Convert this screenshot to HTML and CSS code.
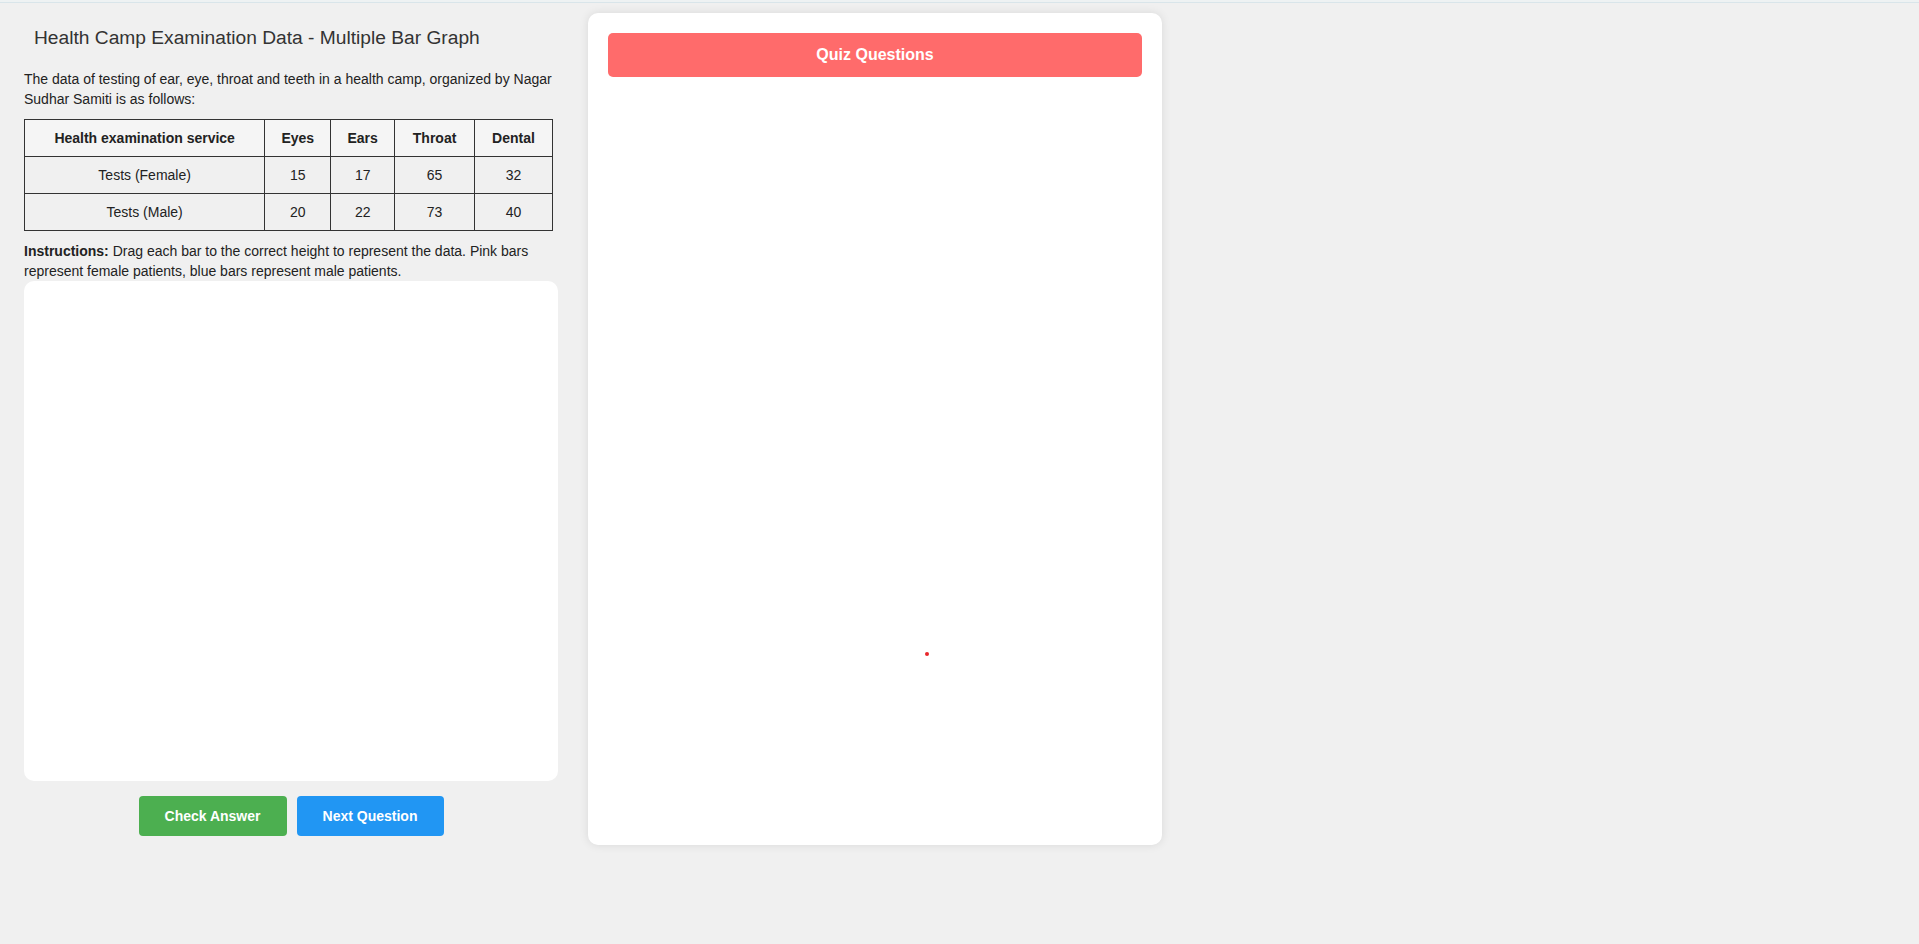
FILE: index.html
```html
<!DOCTYPE html>
<html lang="en">
<head>
<meta charset="utf-8">
<title>Health Camp Examination Data - Multiple Bar Graph</title>
<link rel="stylesheet" href="styles.css">
</head>
<body>
<div class="topbar"></div>
<div class="container">
  <div class="left">
    <h2 class="title">Health Camp Examination Data - Multiple Bar Graph</h2>
    <p class="intro">The data of testing of ear, eye, throat and teeth in a health camp, organized by Nagar Sudhar Samiti is as follows:</p>
    <table class="data">
      <thead>
        <tr>
          <th class="c-service">Health examination service</th>
          <th class="c-eyes">Eyes</th>
          <th class="c-ears">Ears</th>
          <th class="c-throat">Throat</th>
          <th class="c-dental">Dental</th>
        </tr>
      </thead>
      <tbody>
        <tr><td>Tests (Female)</td><td>15</td><td>17</td><td>65</td><td>32</td></tr>
        <tr><td>Tests (Male)</td><td>20</td><td>22</td><td>73</td><td>40</td></tr>
      </tbody>
    </table>
    <p class="instructions"><strong>Instructions:</strong> Drag each bar to the correct height to represent the data. Pink bars represent female patients, blue bars represent male patients.</p>
    <div class="chart"></div>
    <div class="buttons">
      <button class="btn btn-check">Check Answer</button>
      <button class="btn btn-next">Next Question</button>
    </div>
  </div>
  <div class="panel">
    <div class="quiz-header">Quiz Questions</div>
    <span class="dot"></span>
  </div>
</div>
</body>
</html>
```
FILE: styles.css
```css
html, body {
  margin: 0;
  padding: 0;
}
body {
  background: #f0f0f0;
  font-family: "Liberation Sans", Arial, sans-serif;
  color: #222;
  height: 944px;
  overflow: hidden;
}
.topbar {
  height: 2px;
  background: #eef2f3;
  border-bottom: 1px solid #d9e5ea;
}
.container {
  display: flex;
  align-items: flex-start;
  gap: 30px;
  padding: 10px 0 0 24px;
}
.left {
  width: 534px;
  display: flex;
  flex-direction: column;
}
.title {
  font-size: 19.2px;
  font-weight: normal;
  color: #333;
  margin: 0;
  padding: 14px 10px 0;
  line-height: 22px;
}
.intro {
  font-size: 14px;
  line-height: 1.4;
  margin: 21px 0 10px;
}
.data {
  border-collapse: collapse;
  width: 529px;
  font-size: 14px;
  color: #222;
}
.data th, .data td {
  border: 1px solid #333;
  padding: 10px;
  text-align: center;
  line-height: normal;
}
.data th {
  background: #f5f5f5;
  font-weight: bold;
}
.c-service { width: 220px; }
.c-eyes { width: 45px; }
.c-ears { width: 43px; }
.c-throat { width: 59px; }
.c-dental { width: 57px; }
.instructions {
  font-size: 14px;
  line-height: 1.4;
  margin: 11px 0 0;
}
.chart {
  height: 500px;
  background: #fff;
  border-radius: 10px;
}
.buttons {
  display: flex;
  justify-content: center;
  gap: 10px;
  margin-top: 15px;
}
.btn {
  border: none;
  border-radius: 4px;
  color: #fff;
  font-family: "Liberation Sans", Arial, sans-serif;
  font-weight: bold;
  font-size: 14px;
  line-height: 16px;
  padding: 12px 26px;
  cursor: pointer;
}
.btn-check { background: #4caf50; width: 148px; }
.btn-next { background: #2196f3; width: 147px; }
.panel {
  position: relative;
  width: 534px;
  height: 792px;
  margin-top: 0;
  background: #fff;
  border-radius: 10px;
  box-shadow: 0 0 10px rgba(0, 0, 0, 0.1);
  padding: 20px;
}
.quiz-header {
  background: #ff6b6b;
  color: #fff;
  font-weight: bold;
  font-size: 16px;
  line-height: 18px;
  text-align: center;
  padding: 13px 0;
  border-radius: 5px;
}
.dot {
  position: absolute;
  left: 337px;
  top: 639px;
  width: 4px;
  height: 4px;
  border-radius: 50%;
  background: #e8262b;
}
```
